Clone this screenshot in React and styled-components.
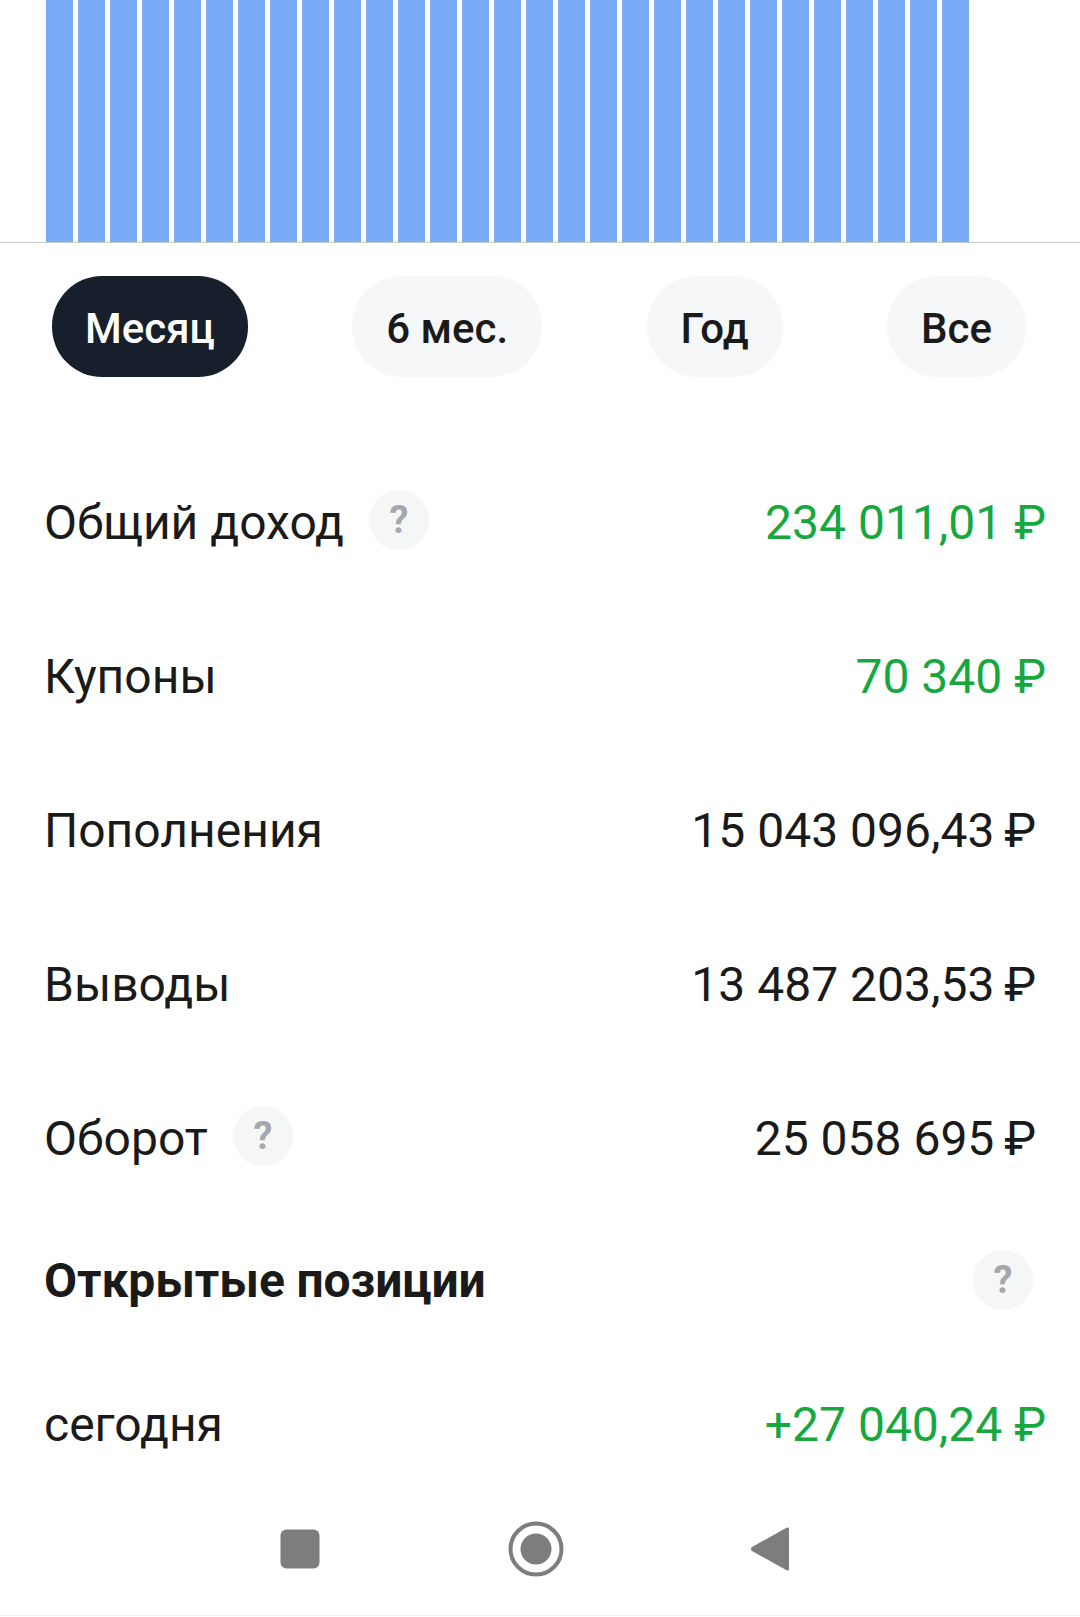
import React from 'react';
import styled, { createGlobalStyle } from 'styled-components';

const GlobalStyle = createGlobalStyle`
html, body {
  margin: 0;
  padding: 0;
  background: #fff;
}
body {
  font-family: Roboto, "Liberation Sans", sans-serif;
  color: #1a1a1a;
}
`
const Page = styled.div`
display: flex;
flex-direction: column;
width: 1080px;
height: 1617px;
overflow: hidden;
background: #fff;
`
const Chart = styled.div`
display: flex;
gap: 5px;
height: 243px;
padding: 0 110px 0 46px;
border-bottom: 1px solid #c9cbce;
box-sizing: border-box;
`
const Bar = styled.div`
width: 27px;
background: #7aabf8;
`
const Periods = styled.div`
display: flex;
justify-content: space-between;
padding: 33px 54px 0 52px;
`
const Period = styled.div`
display: flex;
align-items: center;
height: 101px;
box-sizing: border-box;
padding: 4px ${p => p.$active ? 33 : 34}px 0;
border-radius: 50px;
font-size: 42px;
font-weight: 500;
background: ${p => p.$active ? '#161f2b' : '#f5f7f8'};
color: ${p => p.$active ? '#fff' : '#1a1a1a'};
`
const List = styled.div`
display: flex;
flex-direction: column;
margin-top: 68px;
`
const Row = styled.div`
display: flex;
align-items: center;
justify-content: space-between;
height: ${p => p.$height || 154}px;
padding: 0 ${p => p.$right || 34}px 0 44px;
`
const Label = styled.div`
display: flex;
align-items: center;
gap: 25px;
font-size: 48px;
font-weight: 400;
`
const Heading = styled.div`
font-size: 48px;
font-weight: 700;
letter-spacing: -0.1px;
`
const Value = styled.div`
font-size: 48px;
color: ${p => p.$green ? '#16a83e' : '#1a1a1a'};
`
const Hint = styled.div`
display: flex;
align-items: center;
justify-content: center;
width: 60px;
height: 60px;
margin-top: ${p => p.$flat ? 0 : -4}px;
border-radius: 50%;
background: #f5f6f6;
color: #a4a7ad;
font-size: 38px;
font-weight: 700;
`
const Nav = styled.div`
display: flex;
align-items: center;
height: 92px;
padding: 0 0 20px 182px;
border-bottom: 1px solid #eeeeee;
`
const NavSlot = styled.div`
display: flex;
justify-content: center;
width: 236px;
`

const bars = Array.from({ length: 29 });

const rows = [
  { label: 'Общий доход', hint: true, value: '234 011,01 ₽', green: true },
  { label: 'Купоны', value: '70 340 ₽', green: true },
  { label: 'Пополнения', value: '15 043 096,43\u2009₽', right: 44 },
  { label: 'Выводы', value: '13 487 203,53\u2009₽', right: 44 },
  { label: 'Оборот', hint: true, value: '25 058 695\u2009₽', right: 44 },
];

const App = () => {
  return (
    <Page>
      <GlobalStyle />
      <Chart>
        {bars.map((_, i) => <Bar key={i} />)}
      </Chart>
      <Periods>
        <Period $active>Месяц</Period>
        <Period>6 мес.</Period>
        <Period>Год</Period>
        <Period>Все</Period>
      </Periods>
      <List>
        {rows.map((item, i) => (
          <Row key={i} $right={item.right}>
            <Label>
              {item.label}
              {item.hint && <Hint>?</Hint>}
            </Label>
            <Value $green={item.green}>{item.value}</Value>
          </Row>
        ))}
        <Row $height={130} $right={47}>
          <Heading>Открытые позиции</Heading>
          <Hint $flat>?</Hint>
        </Row>
        <Row $height={158}>
          <Label>сегодня</Label>
          <Value $green>+27 040,24 ₽</Value>
        </Row>
      </List>
      <Nav>
        <NavSlot>
          <svg width="40" height="40" viewBox="0 0 40 40">
            <rect x="0.5" y="0.5" width="39" height="39" rx="6" fill="#7d7d7d" />
          </svg>
        </NavSlot>
        <NavSlot>
          <svg width="56" height="56" viewBox="0 0 56 56">
            <circle cx="28" cy="28" r="25.5" fill="none" stroke="#7d7d7d" strokeWidth="4" />
            <circle cx="28" cy="28" r="15.5" fill="#7d7d7d" />
          </svg>
        </NavSlot>
        <NavSlot>
          <svg width="44" height="46" viewBox="0 0 44 46">
            <path d="M37 1.5a1.5 1.5 0 0 1 2 1.5v40a1.5 1.5 0 0 1-2 1.5L2 25a2.5 2.5 0 0 1 0-4z" fill="#7d7d7d" />
          </svg>
        </NavSlot>
      </Nav>
    </Page>
  );
};

export default App;
